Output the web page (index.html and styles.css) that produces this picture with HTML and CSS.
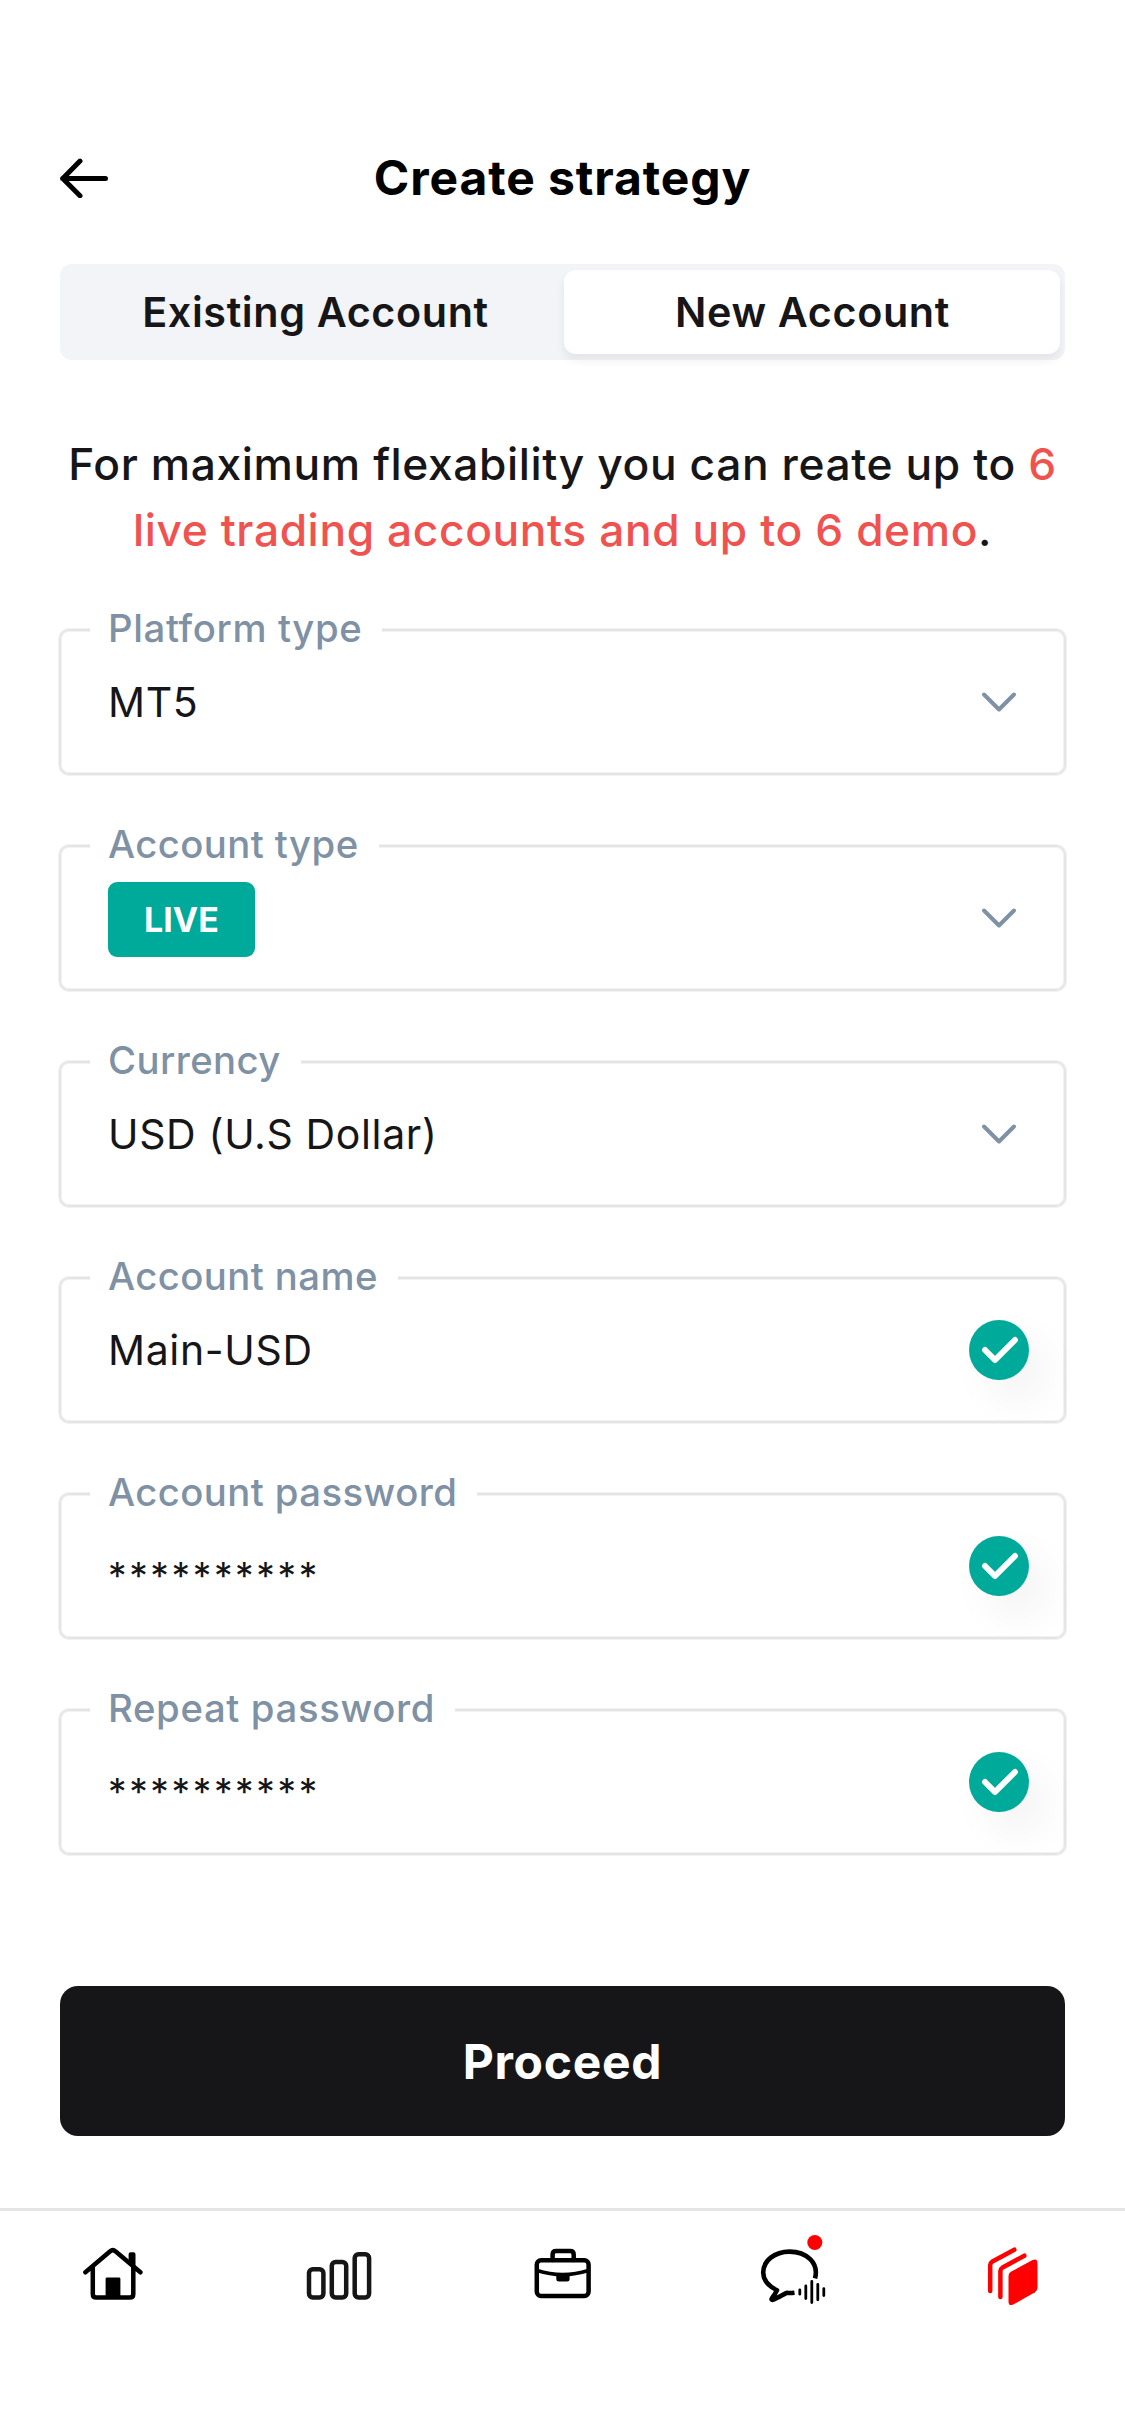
FILE: index.html
```html
<!DOCTYPE html>
<html lang="en">
<head>
<meta charset="utf-8">
<title>Create strategy</title>
<link rel="stylesheet" href="styles.css">
</head>
<body>
<div class="screen">
  <header class="header">
    <svg class="back" viewBox="0 0 48 40"><path d="M2.6 20.500H45.500M20 3.100L2.800 20.500L20 37.700"/></svg>
    <h1 class="title">Create strategy</h1>
  </header>

  <main class="content">
    <div class="segmented">
      <div class="segment">Existing Account</div>
      <div class="segment segment-active">New Account</div>
    </div>

    <p class="intro">For maximum flexability you can reate up to <span class="accent">6<br>live trading accounts and up to 6 demo</span>.</p>

    <form class="form">
      <div class="field">
        <label class="label label-wide">Platform type</label>
        <div class="row"><span class="value">MT5</span>
          <svg class="icon" viewBox="0 0 60 60"><path class="chevron" d="M15 22.500L30 37.500L45 22.500"/></svg></div>
      </div>
      <div class="field">
        <label class="label">Account type</label>
        <div class="row"><span class="badge">LIVE</span>
          <svg class="icon" viewBox="0 0 60 60"><path class="chevron" d="M15 22.500L30 37.500L45 22.500"/></svg></div>
      </div>
      <div class="field">
        <label class="label">Currency</label>
        <div class="row"><span class="value">USD (U.S Dollar)</span>
          <svg class="icon" viewBox="0 0 60 60"><path class="chevron" d="M15 22.500L30 37.500L45 22.500"/></svg></div>
      </div>
      <div class="field">
        <label class="label">Account name</label>
        <div class="row"><span class="value">Main-USD</span>
          <svg class="icon check" viewBox="0 0 60 60"><path d="M16 30L26 40L46 20"/></svg></div>
      </div>
      <div class="field">
        <label class="label">Account password</label>
        <div class="row"><span class="value masked">**********</span>
          <svg class="icon check" viewBox="0 0 60 60"><path d="M16 30L26 40L46 20"/></svg></div>
      </div>
      <div class="field">
        <label class="label label-wide">Repeat password</label>
        <div class="row"><span class="value masked">**********</span>
          <svg class="icon check" viewBox="0 0 60 60"><path d="M16 30L26 40L46 20"/></svg></div>
      </div>
    </form>

    <button class="proceed" type="button">Proceed</button>
  </main>

  <nav class="tabs">
    <svg class="tab" viewBox="0 0 90 90">
      <path d="M17.4 41.3L42.2 20.3Q44.8 18 47.4 20.3L72.4 41.3M24.8 36V63Q24.8 66.6 28.4 66.6H61.6Q65.3 66.6 65.3 63V36"/>
      <path class="solid" d="M60.6 31V23.2Q60.6 21.3 62.6 21.3H65.6Q67.5 21.3 67.5 23.2V37ZM37.6 67V47.8Q37.6 46.4 39 46.4H51Q52.4 46.4 52.4 47.8V67Z"/>
    </svg>
    <svg class="tab tab-bars" viewBox="0 0 90 90">
      <rect x="16" y="38.2" width="14.4" height="28.2" rx="3.8"/>
      <rect x="38.8" y="30.9" width="14.4" height="35.5" rx="3.8"/>
      <rect x="61.7" y="23.2" width="14.4" height="43.2" rx="3.8"/>
    </svg>
    <svg class="tab" viewBox="0 0 90 90">
      <rect x="18.8" y="29.3" width="51.8" height="35.6" rx="4.2"/>
      <path d="M34.6 29V23.6Q34.6 20 38.2 20H52.1Q55.7 20 55.7 23.6V29"/>
      <path class="thin" d="M19 39.5Q44.7 47.6 70.4 39.5"/>
      <path class="solid" d="M38.3 43.5H51.6V48Q51.6 50.5 49 50.5H41Q38.3 50.5 38.3 48Z"/>
    </svg>
    <svg class="tab" viewBox="0 0 90 90">
      <path class="bubble" d="M72 47.4C76.200 32 63.500 20.600 46.400 20.600C31.700 20.600 20.200 29.800 20.200 41.500C20.200 49 25.400 55 34 59.300C32.500 62.300 30.800 64.800 29 67.200C28 68.700 29 69.200 30.600 68.500C35 66.800 40 63.500 43.700 61.800C46 62.200 49 62 51.500 61.700"/>
      <path class="wave" d="M56.800 59V63.200M62.800 54.900V67.500M68.800 50.300V71.500M74.800 53.500V68.800M80.800 57.600V64.600"/>
      <circle class="dot" cx="71.800" cy="11.500" r="7.500"/>
    </svg>
    <svg class="tab tab-active" viewBox="0 0 90 90">
      <path d="M22.200 60V34Q22.200 31.900 24 30.800L46.300 18.700M32.400 65.900V40Q32.400 37.900 34.200 36.800L56.300 24.700"/>
      <path class="panel" d="M40.500 45Q40.500 42.300 42.900 40.800L64.600 28.900Q69.500 27 69.500 32V56.500Q69.500 59.700 67 61.300L45.200 73.600Q40.500 75.500 40.500 70.500Z"/>
    </svg>
  </nav>
</div>
</body>
</html>
```
FILE: styles.css
```css
* { box-sizing: border-box; margin: 0; }

body {
  background: #fff;
  font-family: Inter, "Liberation Sans", sans-serif;
  color: #161618;
}

svg { display: block; fill: none; flex: none; }

.screen {
  width: 1125px;
  height: 2436px;
  display: flex;
  flex-direction: column;
}

.header {
  display: grid;
  grid-template-columns: 48px 1fr 48px;
  align-items: center;
  height: 92px;
  margin: 132px 60px 0;
}

.back {
  width: 48px;
  height: 40px;
  stroke: #000;
  stroke-width: 5;
  stroke-linecap: round;
  stroke-linejoin: round;
}

.title {
  font-size: 48px;
  line-height: 60px;
  font-weight: 700;
  letter-spacing: 0.9px;
  text-align: center;
  color: #000;
}

.content {
  display: flex;
  flex-direction: column;
  padding: 40px 59px 0;
}

.segmented {
  display: grid;
  grid-template-columns: 504px 496px;
  height: 96px;
  margin: 0 1px;
  padding: 6px 0;
  border-radius: 12px;
  background: #f3f4f7;
}

.segment {
  display: flex;
  align-items: center;
  justify-content: center;
  padding-left: 7px;
  border-radius: 12px;
  font-size: 41.3px;
  font-weight: 600;
  letter-spacing: 0.62px;
}

.segment-active {
  padding-left: 1px;
  background: #fff;
  box-shadow: 0 6px 10px rgba(22, 22, 24, 0.07);
}

.intro {
  margin-top: 71px;
  font-size: 44.3px;
  line-height: 66px;
  font-weight: 500;
  letter-spacing: 0.6px;
  text-align: center;
  white-space: nowrap;
}

.accent { color: #f0534f; }

.form {
  display: flex;
  flex-direction: column;
  gap: 70px;
  margin-top: 66px;
}

.field {
  display: grid;
  height: 146px;
  border: 2px solid #e5e5e5;
  border-radius: 10px;
  box-shadow: 0 0 0 1px #f2f2f2, inset 0 0 0 1px #f2f2f2;
}

.label,
.row { grid-area: 1 / 1; }

.label {
  justify-self: start;
  align-self: start;
  margin: -26px 0 0 29px;
  padding: 0 20px 0 18px;
  background: #fff;
  font-size: 38.3px;
  line-height: 46px;
  font-weight: 500;
  letter-spacing: 0.42px;
  color: #7f91a4;
}

.label-wide { letter-spacing: 0.64px; }

.row {
  display: flex;
  align-items: center;
  justify-content: space-between;
  padding: 0 35px 0 47px;
}

.value {
  font-size: 41px;
  line-height: 51px;
  letter-spacing: 0.65px;
}

.masked {
  padding-top: 19px;
  font-size: 37px;
  letter-spacing: 2.65px;
}

.badge {
  width: 147px;
  margin-top: 2px;
  border-radius: 9px;
  background: #00aa9b;
  color: #fff;
  font-size: 34px;
  line-height: 75px;
  font-weight: 700;
  text-align: center;
}

.icon { width: 60px; height: 60px; }

.chevron {
  stroke: #7f91a4;
  stroke-width: 4;
  stroke-linecap: round;
  stroke-linejoin: round;
}

.check {
  border-radius: 50%;
  background: #00aa9b;
  box-shadow: 18px 20px 42px rgba(0, 0, 0, 0.05);
  stroke: #fff;
  stroke-width: 6;
  stroke-linecap: round;
  stroke-linejoin: round;
}

.proceed {
  height: 150px;
  margin: 131px 1px 0;
  padding: 1px 0 0;
  border: 0;
  border-radius: 18px;
  background: #161618;
  color: #fff;
  font: 700 48px/60px Inter, "Liberation Sans", sans-serif;
  letter-spacing: 0.7px;
}

.tabs {
  display: grid;
  grid-template-columns: repeat(5, 1fr);
  justify-items: center;
  margin-top: 72px;
  padding-top: 20px;
  border-top: 3px solid #e5e5e5;
}

.tab {
  width: 90px;
  height: 90px;
  stroke: #000;
  stroke-width: 4.5;
  stroke-linecap: round;
  stroke-linejoin: round;
}

.tab-bars { stroke: #161618; }
.solid { fill: #000; stroke: none; }
.thin { stroke-width: 3.8; }
.bubble { stroke-width: 4.6; stroke-linecap: butt; }
.wave { stroke-width: 2.8; }
.dot { fill: #f00; stroke: none; }
.tab-active { stroke: #f00; }
.panel { fill: #f00; stroke: none; }
```
